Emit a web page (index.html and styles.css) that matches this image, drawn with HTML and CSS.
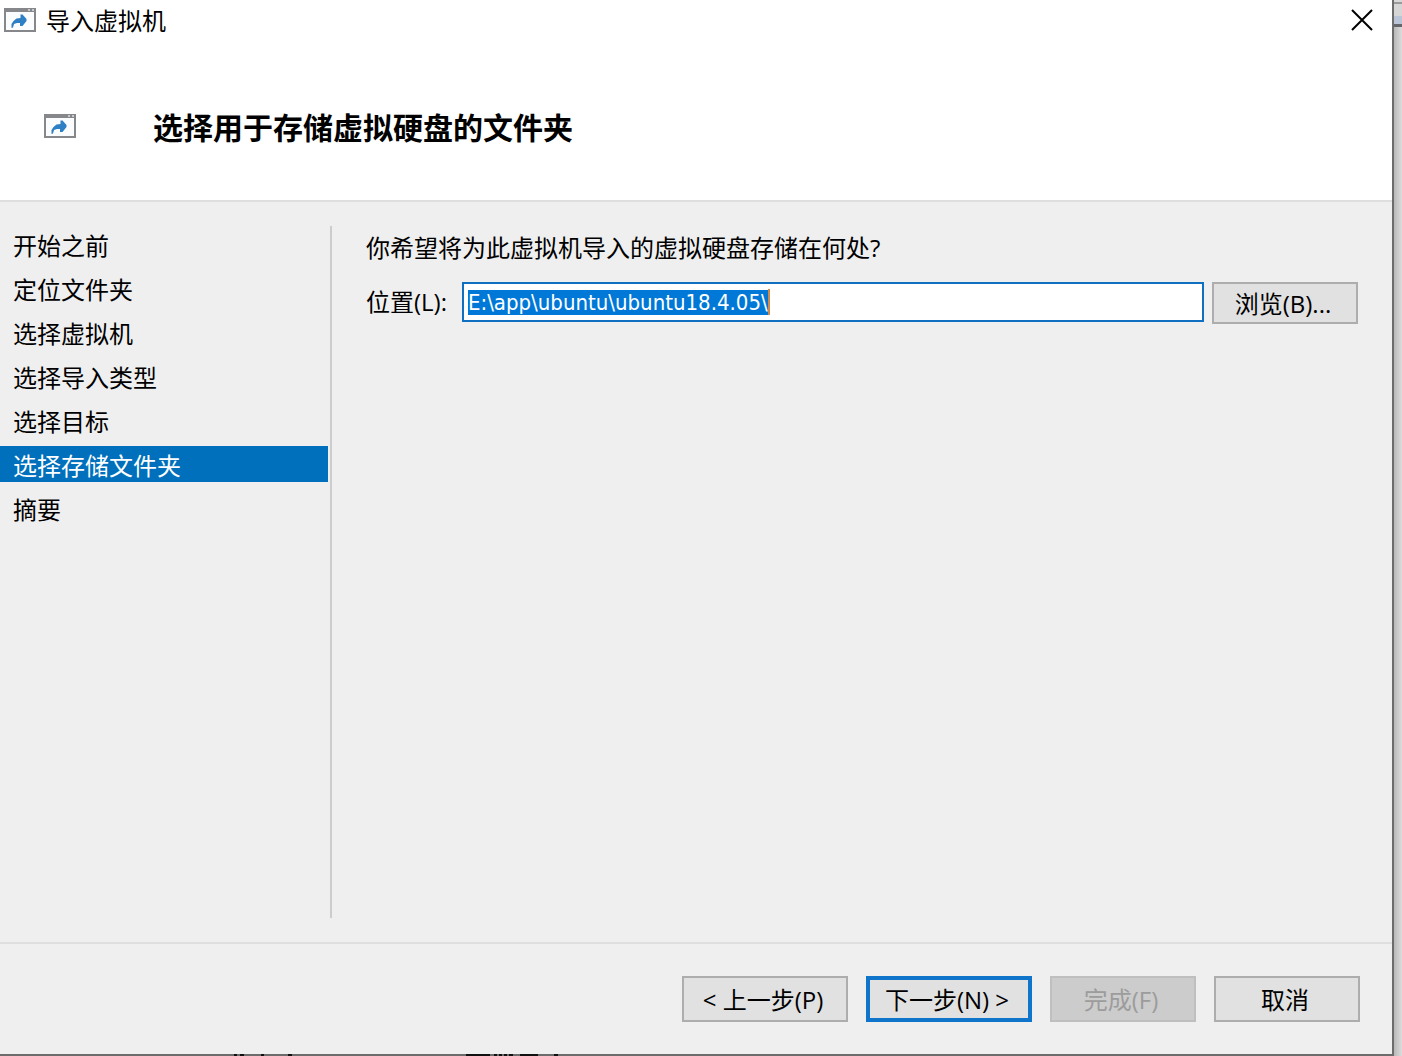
FILE: index.html
```html
<!DOCTYPE html>
<html lang="zh-CN">
<head>
<meta charset="utf-8">
<title>导入虚拟机</title>
<link rel="stylesheet" href="styles.css">
</head>
<body>
<svg class="symbols" aria-hidden="true">
  <symbol id="import" viewBox="0 0 32 24">
    <rect x="1" y="1" width="30" height="22" fill="#fbfcfd" stroke="#85878a" stroke-width="2"/>
    <path d="M1 2h30" stroke="#85878a" stroke-width="4"/>
    <path d="M24 2h2M28 2h2" stroke="#c8cacc" stroke-width="2"/>
    <path d="M7.500 20v-4l2-3 3-2.500 4-.5V6.500h2l4 4.500v2l-4 5h-2.500v-3h-3l-3 1-1 3.500z" fill="#2f7fc4"/>
  </symbol>
</svg>
<div class="desktop">
  <main class="dialog">
    <header class="top">
      <div class="titlebar">
        <svg class="app-icon"><use href="#import"/></svg>
        <span class="caption">导入虚拟机</span>
        <button class="close" type="button" aria-label="关闭">
          <svg width="22" height="22" viewBox="0 0 22 22"><path d="M1 1l20 20M21 1L1 21" stroke="#000" stroke-width="2"/></svg>
        </button>
      </div>
      <div class="heading">
        <svg class="app-icon"><use href="#import"/></svg>
        <h1>选择用于存储虚拟硬盘的文件夹</h1>
      </div>
    </header>
    <div class="body">
      <nav class="steps">
        <a href="#">开始之前</a>
        <a href="#">定位文件夹</a>
        <a href="#">选择虚拟机</a>
        <a href="#">选择导入类型</a>
        <a href="#">选择目标</a>
        <a href="#" class="current" aria-current="step">选择存储文件夹</a>
        <a href="#">摘要</a>
      </nav>
      <section class="content">
        <p>你希望将为此虚拟机导入的虚拟硬盘存储在何处?</p>
        <div class="row">
          <label for="location">位置(L):</label>
          <div class="field">
            <input id="location" type="text" value="E:\app\ubuntu\ubuntu18.4.05\" spellcheck="false">
            <span class="caret"></span>
          </div>
          <button class="btn browse" type="button">浏览(B)...</button>
        </div>
      </section>
    </div>
    <footer class="actions">
      <button class="btn wide" type="button">&lt; 上一步(P)</button>
      <button class="btn wide default" type="button">下一步(N) &gt;</button>
      <button class="btn" type="button" disabled>完成(F)</button>
      <button class="btn" type="button">取消</button>
    </footer>
    <svg class="peek" width="330" height="2" viewBox="0 0 330 2" aria-hidden="true">
      <path d="M0 1h3M6 1h4M27 1h3M54 1h4M232 1h24M260 1h3M265 1h3M270 1h3M275 1h4M286 1h18M320 1h4" stroke="#111" stroke-width="2"/>
    </svg>
  </main>
  <div class="behind"></div>
</div>
<script src="main.js"></script>
</body>
</html>
```
FILE: styles.css
```css
* { box-sizing: border-box; }

body {
  margin: 0;
  background: #efefef;
  color: #000;
  font: 24px/36px "Open Sans", "Noto Sans CJK SC", sans-serif;
}

.symbols { position: absolute; width: 0; height: 0; }

.desktop { display: flex; min-height: 100vh; }

.dialog {
  position: relative;
  flex: 1;
  display: flex;
  flex-direction: column;
  border-right: 2px solid #6c6c6c;
  border-bottom: 2px solid #6c6c6c;
}

/* Slivers of the window underneath */
.behind {
  width: 8px;
  background:
    linear-gradient(#d8d8d8 0 2px, #9a9a9a 2px 4px, #d6d6d6 4px 16px, #b9c5d6 16px 24px, #65666b 24px 27px, transparent 27px),
    linear-gradient(90deg, #b8b8b8, #dcdcdc);
}

.peek { position: absolute; left: 234px; bottom: -2px; }

.top { background: #fff; border-bottom: 2px solid #dfdfdf; }

.titlebar { display: flex; align-items: center; height: 40px; padding: 0 19px 0 4px; }
.caption { flex: 1; margin-left: 10px; padding-top: 2px; }
.app-icon { width: 32px; height: 24px; flex: none; }

.close {
  display: flex;
  padding: 0;
  border: 0;
  background: none;
}

.heading {
  display: flex;
  align-items: center;
  gap: 77px;
  padding: 64px 44px 52px;
}

h1 { margin: 0; padding-top: 4px; font-size: 30px; line-height: 40px; font-weight: 700; }

.body { flex: 1; display: flex; padding: 24px 0; }

.steps {
  width: 332px;
  padding-right: 2px;
  border-right: 2px solid #cccccc;
  display: flex;
  flex-direction: column;
  gap: 8px;
}

.steps a { padding: 4px 0 0 13px; line-height: 32px; color: #000; text-decoration: none; }
.steps .current { background: #0070bc; color: #fff; }

.content { flex: 1; padding: 4px 34px 0; }
.content p { margin: 0 0 16px; }

.row { display: flex; align-items: flex-start; }
.row label { width: 96px; line-height: 40px; }

.field { position: relative; flex: 1; margin-right: 8px; }

input {
  display: block;
  width: 100%;
  height: 40px;
  padding: 0 4px;
  border: 2px solid #0f6fc0;
  outline: 0;
  background: #fff;
  color: #000;
  font: 22px/26px "DejaVu Sans Condensed", "Noto Sans CJK SC", sans-serif;
}

input::selection { background: #0078d7; color: #fff; }

.caret {
  position: absolute;
  left: 306px;
  top: 7px;
  width: 2px;
  height: 26px;
  background: #d08a4c;
}

.btn {
  width: 146px;
  height: 46px;
  padding: 2px 4px 0 0;
  border: 2px solid #adadad;
  background: #e1e1e1;
  color: #000;
  font: inherit;
  line-height: 36px;
}

.btn.browse { height: 42px; }
.btn.wide { width: 166px; }
.btn.default { border: 4px solid #0f75cb; }
.btn:disabled { border-color: #bfbfbf; background: #cccccc; color: #9c9c9c; }

.actions {
  display: flex;
  justify-content: flex-end;
  gap: 18px;
  padding: 32px;
  border-top: 2px solid #dfdfdf;
}
```
FILE: main.js
```js
const field = document.getElementById('location');
field.focus();
field.select();
```
